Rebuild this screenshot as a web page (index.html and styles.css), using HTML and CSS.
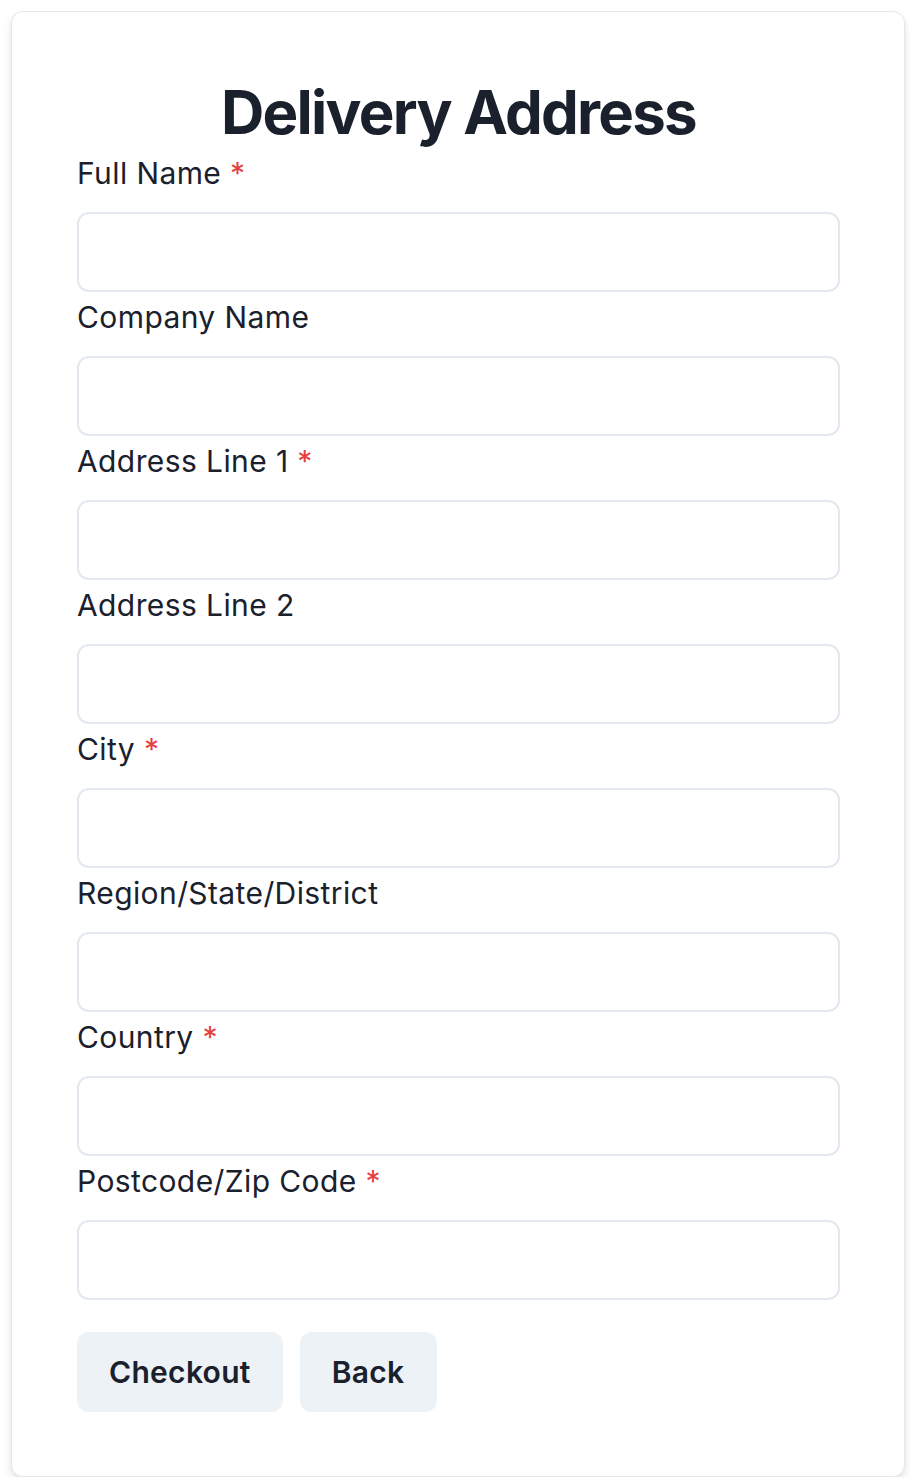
FILE: index.html
```html
<!DOCTYPE html>
<html lang="en">
<head>
<meta charset="utf-8">
<title>Delivery Address</title>
<link rel="stylesheet" href="styles.css">
</head>
<body>
<div class="page">
  <form class="card">
    <h1 class="title">Delivery Address</h1>
    <div class="field">
      <label class="label">Full Name <span class="req">*</span></label>
      <input class="input" type="text">
    </div>
    <div class="field">
      <label class="label">Company Name</label>
      <input class="input" type="text">
    </div>
    <div class="field">
      <label class="label">Address Line 1 <span class="req">*</span></label>
      <input class="input" type="text">
    </div>
    <div class="field">
      <label class="label">Address Line 2</label>
      <input class="input" type="text">
    </div>
    <div class="field">
      <label class="label">City <span class="req">*</span></label>
      <input class="input" type="text">
    </div>
    <div class="field">
      <label class="label">Region/State/District</label>
      <input class="input" type="text">
    </div>
    <div class="field">
      <label class="label">Country <span class="req">*</span></label>
      <input class="input" type="text">
    </div>
    <div class="field">
      <label class="label">Postcode/Zip Code <span class="req">*</span></label>
      <input class="input" type="text">
    </div>
    <div class="actions">
      <button type="button" class="btn">Checkout</button>
      <button type="button" class="btn">Back</button>
    </div>
  </form>
</div>
</body>
</html>
```

FILE: styles.css
```css
* { box-sizing: border-box; }
html, body {
  margin: 0;
  padding: 0;
  background: #ffffff;
}
body {
  font-family: Inter, "Noto Sans", "Liberation Sans", sans-serif;
  color: #1a202c;
}
.page {
  padding: 11px 5px 0 11px;
}
.card {
  display: flex;
  flex-direction: column;
  width: 894px;
  background: #ffffff;
  border: 1px solid #e2e8f0;
  border-radius: 12px;
  padding: 64px 64px 64px 65px;
  box-shadow: 0 6px 12px rgba(0, 0, 0, 0.08), 0 2px 4px rgba(0, 0, 0, 0.05);
}
.title {
  margin: 0;
  font-size: 60px;
  line-height: 72px;
  font-weight: 700;
  letter-spacing: -1.75px;
  text-align: center;
  color: #1a202c;
}
.field {
  display: flex;
  flex-direction: column;
}
.label {
  font-size: 30px;
  line-height: 45px;
  padding-top: 3px;
  font-weight: 400;
  letter-spacing: 0.4px;
  margin-bottom: 16px;
  color: #1a202c;
}
.req {
  color: #e53e3e;
}
.input {
  height: 80px;
  width: 100%;
  border: 2px solid #e2e8f0;
  border-radius: 12px;
  background: #ffffff;
  font: inherit;
  font-size: 30px;
  padding: 0 24px;
  margin: 0;
  outline: none;
}
.actions {
  display: flex;
  gap: 17px;
  margin-top: 32px;
}
.btn {
  height: 80px;
  padding: 0 32px;
  border: none;
  border-radius: 12px;
  background: #edf2f7;
  color: #1a202c;
  font-family: inherit;
  font-size: 30px;
  font-weight: 600;
  letter-spacing: 0.3px;
  cursor: pointer;
}
```
